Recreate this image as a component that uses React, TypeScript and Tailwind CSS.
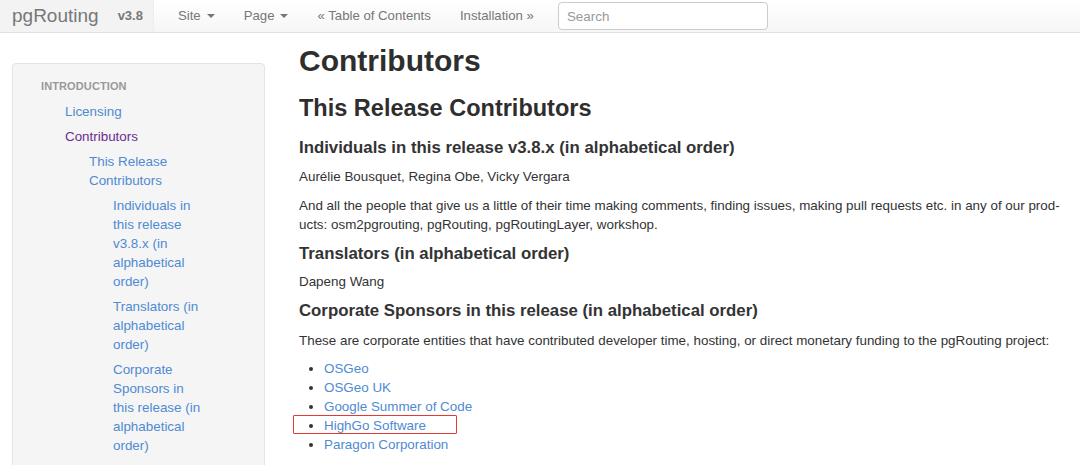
import { ReactNode } from "react";

const link = "text-[#4f8ad3]";

function Caret() {
  return <span className="ml-1.5 inline-block align-middle border-x-[4px] border-t-[4px] border-x-transparent border-t-[#777] -mt-0.5" />;
}

function NavBar() {
  return (
    <header className="h-[33px] border-b border-[#e0e0e0] bg-gradient-to-b from-white to-[#f6f6f6] flex items-stretch text-[13.2px] text-[#777]">
      <div className="flex items-center pl-3 pr-2.5 bg-[#f3f3f3] border-r border-[#eee]">
        <span className="text-[19px] text-[#777]">pgRouting</span>
        <span className="ml-[19px] font-bold text-[13px] text-[#777]">v3.8</span>
      </div>
      <nav className="flex items-center pl-[24px] gap-[29px]">
        <span>Site<Caret /></span>
        <span>Page<Caret /></span>
        <span>« Table of Contents</span>
        <span>Installation »</span>
      </nav>
      <div className="flex items-center ml-[24px]">
        <input
          placeholder="Search"
          className="w-[210px] h-[28px] border border-[#ccc] rounded-[4px] bg-white px-[8px] text-[13.4px] placeholder-[#999] outline-none"
        />
      </div>
    </header>
  );
}

function Item({ indent, children, className = "" }: { indent: number; children: ReactNode; className?: string }) {
  return (
    <li className={`leading-[19px] ${className}`} style={{ paddingLeft: indent }}>
      {children}
    </li>
  );
}

function Sidebar() {
  return (
    <aside className="ml-3 mt-[30px] w-[253px] shrink-0 bg-[#f5f5f5] border border-[#e3e3e3] rounded-[4px] pt-[14px] pb-4 text-[13.4px] self-start">
      <div className="pl-[28px] text-[11px] font-bold text-[#999] tracking-[0.01em] mb-[7px]">INTRODUCTION</div>
      <ul className="flex flex-col gap-[6px]">
        <Item indent={52} className={link}>Licensing</Item>
        <Item indent={52} className="text-[#6a2c91]">Contributors</Item>
        <Item indent={76} className={`${link} w-[190px]`}>This Release Contributors</Item>
        <Item indent={100} className={`${link} w-[192px]`}>Individuals in this release v3.8.x (in alphabetical order)</Item>
        <Item indent={100} className={`${link} w-[192px]`}>Translators (in alphabetical order)</Item>
        <Item indent={100} className={`${link} w-[192px]`}>Corporate Sponsors in this release (in alphabetical order)</Item>
      </ul>
    </aside>
  );
}

function H3({ children, className = "" }: { children: ReactNode; className?: string }) {
  return <h3 className={`text-[16.8px] font-bold text-[#333] leading-[22px] ${className}`}>{children}</h3>;
}

function Content() {
  const sponsors = ["OSGeo", "OSGeo UK", "Google Summer of Code", "HighGo Software", "Paragon Corporation"];
  return (
    <main className="ml-[34px] pr-3 text-[13.4px] leading-[19px] text-[#333]">
      <h1 className="text-[30px] font-bold leading-[36px] mt-[10px] text-[#2e2e2e]">Contributors</h1>
      <h2 className="text-[23.5px] font-bold leading-[28px] mt-[15px] text-[#2e2e2e]">This Release Contributors</h2>
      <H3 className="mt-[15px]">Individuals in this release v3.8.x (in alphabetical order)</H3>
      <p className="mt-[8px]">Aurélie Bousquet, Regina Obe, Vicky Vergara</p>
      <p className="mt-[10px]">
        And all the people that give us a little of their time making comments, finding issues, making pull requests etc. in any of our prod-
        <br />
        ucts: osm2pgrouting, pgRouting, pgRoutingLayer, workshop.
      </p>
      <H3 className="mt-[9px]">Translators (in alphabetical order)</H3>
      <p className="mt-[7px]">Dapeng Wang</p>
      <H3 className="mt-[9px]">Corporate Sponsors in this release (in alphabetical order)</H3>
      <p className="mt-[9px]">These are corporate entities that have contributed developer time, hosting, or direct monetary funding to the pgRouting project:</p>
      <ul className="mt-[9px] list-disc pl-[25px] marker:text-[#333]">
        {sponsors.map((s) => (
          <li key={s} className={s === "HighGo Software" ? "relative" : ""}>
            <span className={link}>{s}</span>
            {s === "HighGo Software" && (
              <span className="absolute left-[-31px] top-[-1px] w-[164px] h-[19px] border border-[#e53935] rounded-[1px] pointer-events-none" />
            )}
          </li>
        ))}
      </ul>
    </main>
  );
}

export default function App() {
  return (
    <div className="w-[1080px] h-[465px] overflow-hidden bg-white" style={{ fontFamily: '"Liberation Sans", Arial, sans-serif' }}>
      <NavBar />
      <div className="flex">
        <Sidebar />
        <Content />
      </div>
    </div>
  );
}
